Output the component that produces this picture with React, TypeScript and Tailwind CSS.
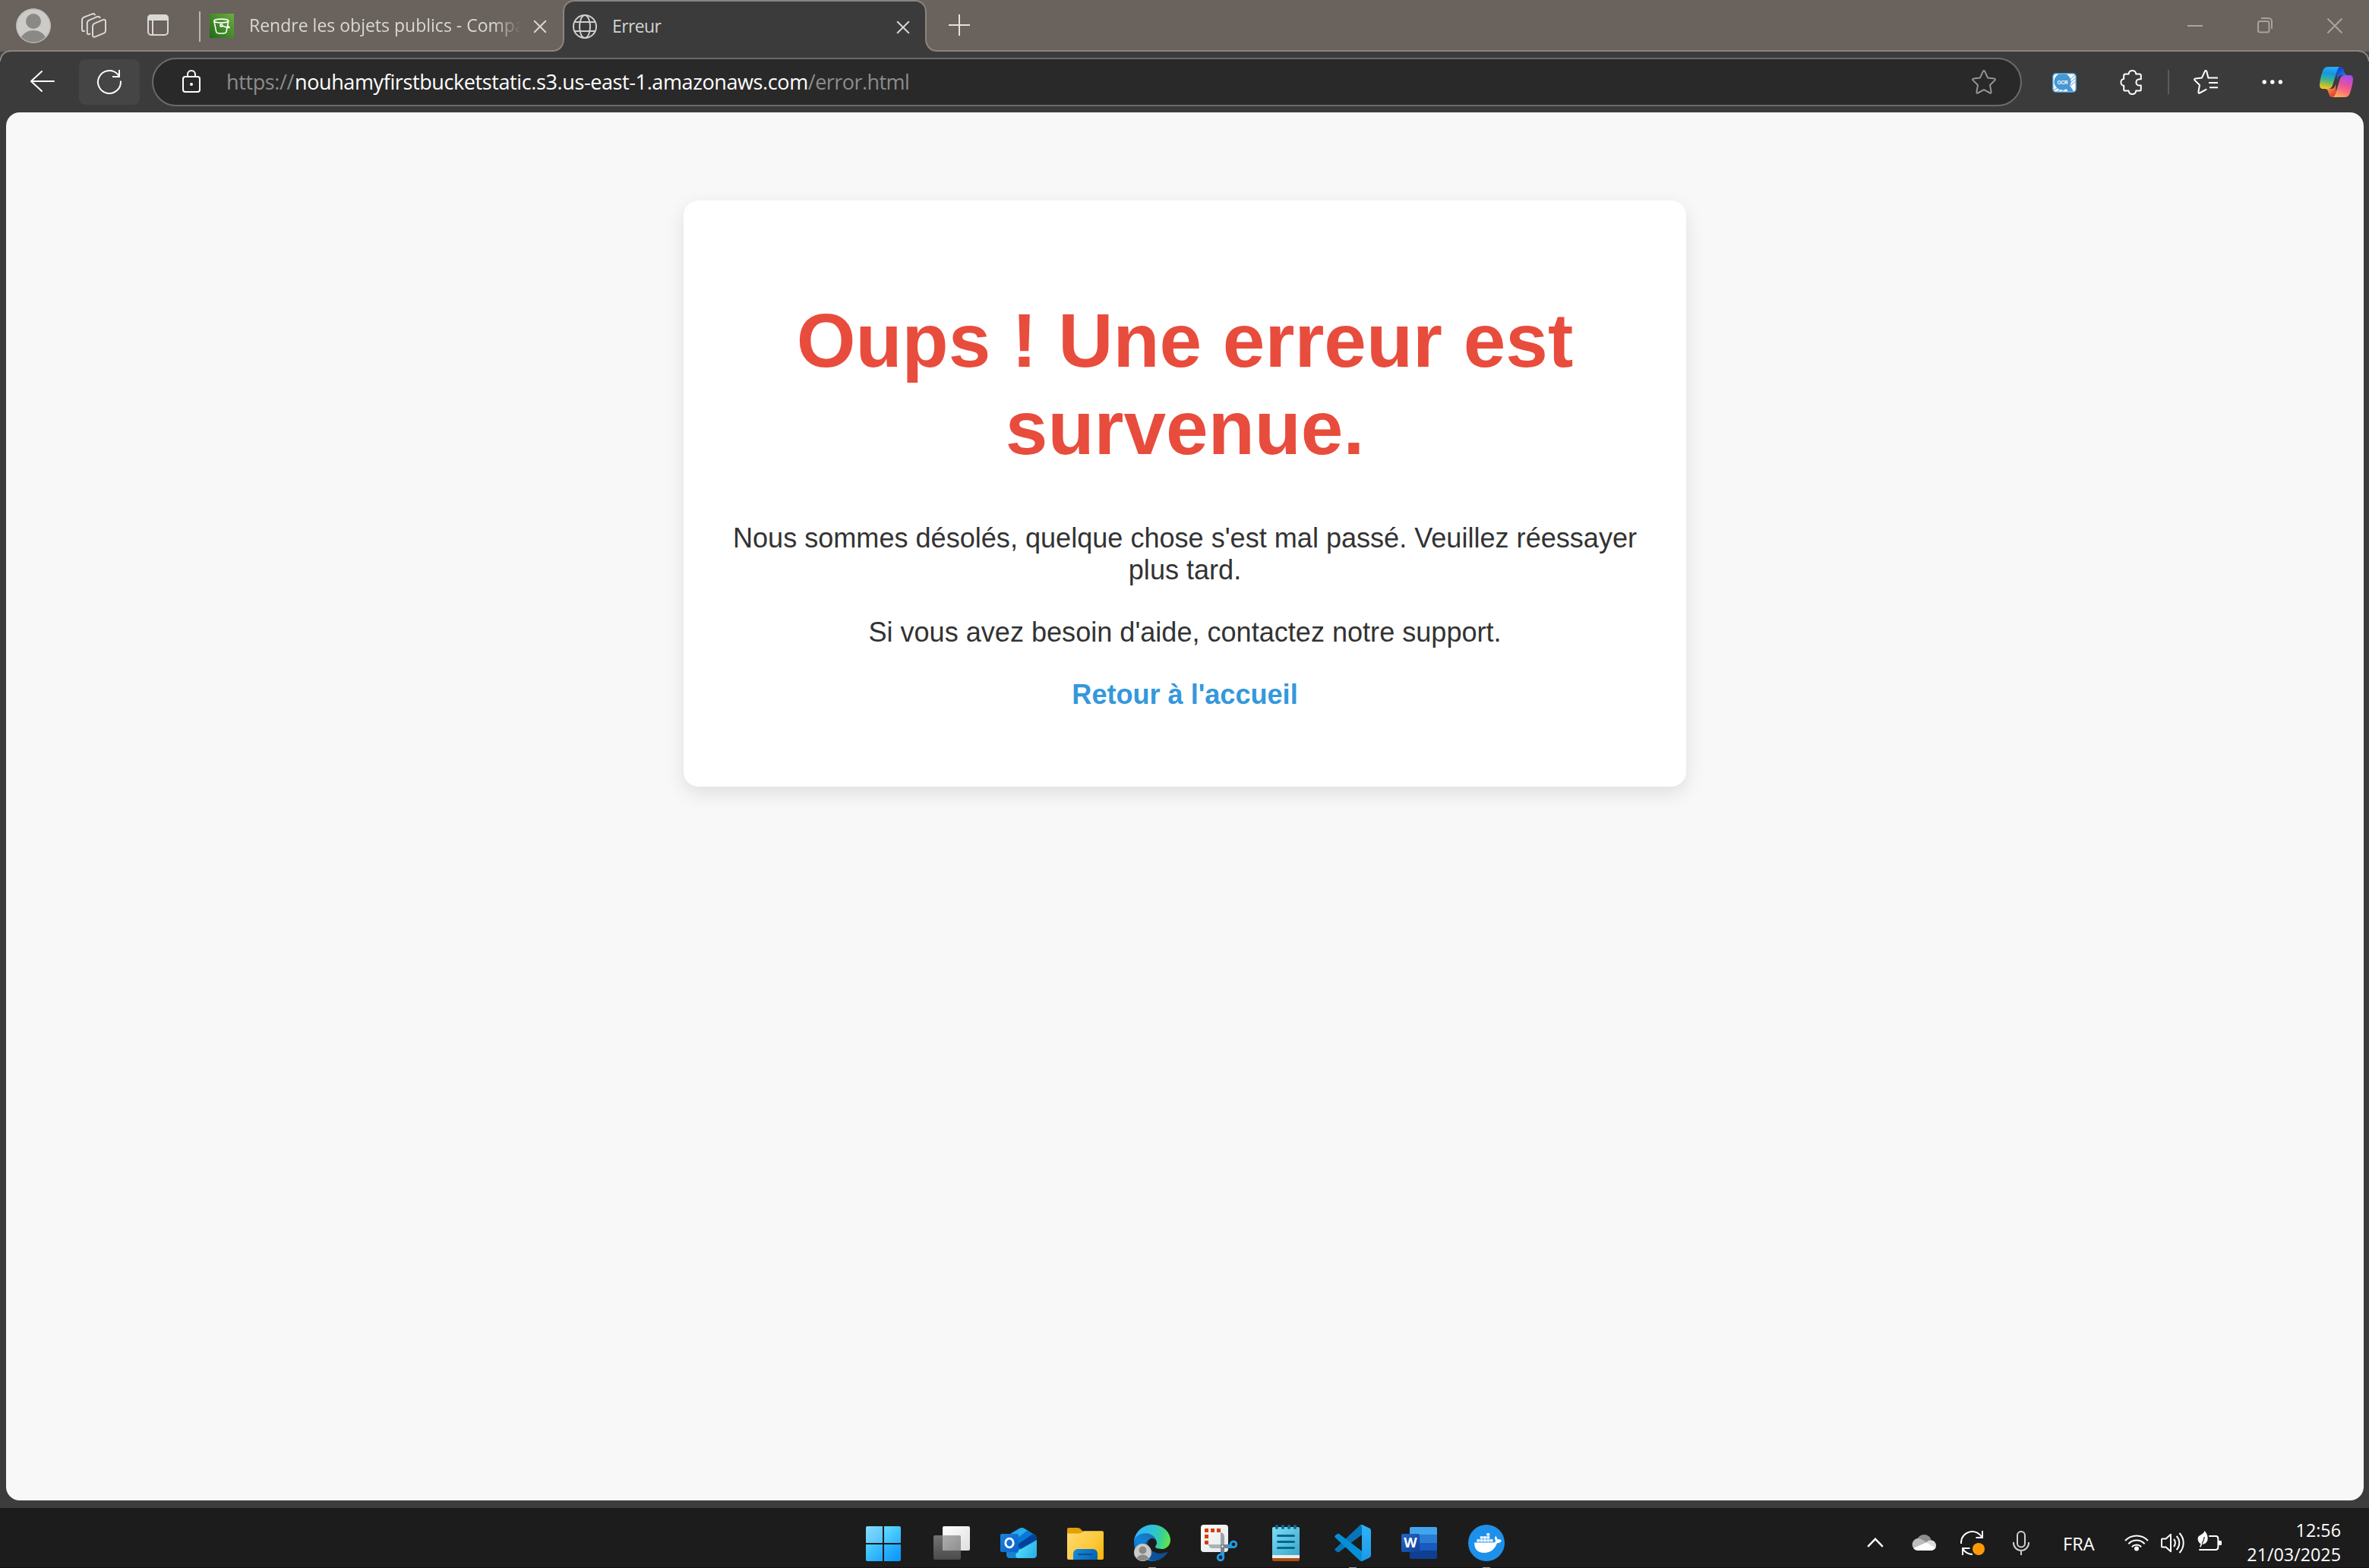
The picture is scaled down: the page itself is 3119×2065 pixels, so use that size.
import type { ReactNode } from "react";

type SvgProps = { w: number; h: number; className?: string; children: ReactNode; box?: string };

function Svg({ w, h, className = "", children, box }: SvgProps) {
  return (
    <svg width={w} height={h} viewBox={box ?? `0 0 ${w} ${h}`} fill="none" className={`shrink-0 overflow-visible ${className}`}>
      {children}
    </svg>
  );
}

/* ---------- tab strip ---------- */

function Avatar({ size, className = "" }: { size: number; className?: string }) {
  return (
    <Svg w={size} h={size} box="0 0 46 46" className={className}>
      <clipPath id={`av${size}`}><circle cx="23" cy="23" r="22.6" /></clipPath>
      <circle cx="23" cy="23" r="22.8" fill="#cdcbc7" />
      <g clipPath={`url(#av${size})`} fill="#8b8985">
        <circle cx="23" cy="17" r="10" />
        <ellipse cx="23" cy="44" rx="17.5" ry="15" />
      </g>
      <circle cx="23" cy="23" r="22.2" stroke="#bab7b2" strokeWidth="1.2" />
    </Svg>
  );
}

function WorkspacesIcon() {
  return (
    <Svg w={33} h={33} className="ml-[40px]">
      <g stroke="#dad8d5" strokeWidth="2" strokeLinejoin="round" strokeLinecap="round">
        <path d="M18 13.6 L28.6 9.2 C30.6 8.4 32 9.1 32 11 V23.5 C32 25 31.3 26 30 26.6 L18.4 31.4 C16.4 32.2 15 31.4 15 29.5 V17.8 C15 15.6 16 14.4 18 13.6 Z" />
        <path d="M11.4 27.6 C8.8 28.8 7.8 28 7.8 25.6 V13.6 C7.8 11.6 8.6 10.4 10.4 9.6 L20.6 5.2 C22.6 4.4 23.8 4.8 24.6 6.2" />
        <path d="M4 23.8 C1.8 24.6 1 23.6 1 21.6 V9.8 C1 7.8 1.8 6.4 3.6 5.6 L13.8 1.6 C15.8 .8 17.4 1.2 18 2.4" />
      </g>
    </Svg>
  );
}

function TabActionsIcon() {
  return (
    <Svg w={28} h={28} className="ml-[54px]">
      <rect x="1" y="1" width="26" height="26" rx="4" stroke="#dad8d5" strokeWidth="2" />
      <path d="M0 8 V5 a5 5 0 0 1 5-5 H23 a5 5 0 0 1 5 5 V8 Z" fill="#dad8d5" />
      <path d="M7 8 V27" stroke="#dad8d5" strokeWidth="2" />
    </Svg>
  );
}

function BucketFavicon() {
  return (
    <Svg w={32} h={32} className="ml-[12px] mt-[2px]">
      <defs>
        <linearGradient id="s3" x1="0" y1="32" x2="32" y2="0" gradientUnits="userSpaceOnUse">
          <stop stopColor="#1f6a17" /><stop offset="1" stopColor="#6cae3e" />
        </linearGradient>
      </defs>
      <rect width="32" height="32" fill="url(#s3)" />
      <g stroke="#fff" strokeWidth="1.6" strokeLinejoin="round" strokeLinecap="round">
        <ellipse cx="15.3" cy="9.6" rx="9.4" ry="2.5" />
        <path d="M5.9 9.8 L8.8 24.2 C9.6 26.6 21 26.6 21.9 24.2 L24.7 9.8" />
        <circle cx="15.3" cy="15.6" r="1.5" />
        <path d="M16.8 16 C20 17.4 23 18.4 25 18.4 C26.4 18.4 26.6 17.6 24 16.4" />
      </g>
    </Svg>
  );
}

function GlobeIcon() {
  return (
    <Svg w={32} h={32} className="ml-[11px]">
      <g stroke="#cfcfcf" strokeWidth="2">
        <circle cx="16" cy="16" r="15" />
        <ellipse cx="16" cy="16" rx="7" ry="15" />
        <path d="M2.5 10 H29.5 M2.5 22 H29.5" />
      </g>
    </Svg>
  );
}

function CloseIcon({ className = "" }: { className?: string }) {
  return (
    <Svg w={16} h={16} className={className}>
      <path d="M.7 .7 L15.3 15.3 M15.3 .7 L.7 15.3" stroke="#d8d6d3" strokeWidth="2" strokeLinecap="round" />
    </Svg>
  );
}

function TabStrip() {
  return (
    <div className="flex h-[68px] items-stretch bg-[#6a625c]">
      <div className="flex w-[741px] shrink-0 items-center border-b-2 border-[#8b857f] text-[23px] text-[#dad8d5]">
        <Avatar size={46} className="ml-[21px] mt-[2px]" />
        <WorkspacesIcon />
        <TabActionsIcon />
        <div className="ml-[40px] mt-1 h-10 w-[2px] bg-[#bab5b0]" />
        <BucketFavicon />
        <div className="ml-[20px] w-[362px] whitespace-nowrap leading-[66px] [mask-image:linear-gradient(to_right,black_322px,transparent_358px)]">
          Rendre les objets publics - Compa
        </div>
        <CloseIcon className="ml-[13px] mt-1" />
      </div>
      <div className="relative flex w-[479px] shrink-0 items-center rounded-t-[15px] border-x-2 border-t-2 border-[#8b857f] bg-[#3b3b3b] text-[23px] text-[#d2d2d2]">
        <svg width="16" height="18" viewBox="0 0 16 18" fill="none" className="absolute -left-[16px] bottom-0">
          <path d="M0 18 V17 C9 17 15 11 15 1 V0 H16 V18 Z" fill="#3b3b3b" />
          <path d="M0 17 C9 17 15 11 15 1 V0" stroke="#8b857f" strokeWidth="2" />
        </svg>
        <svg width="16" height="18" viewBox="0 0 16 18" fill="none" className="absolute -right-[16px] bottom-0">
          <path d="M16 18 V17 C7 17 1 11 1 1 V0 H0 V18 Z" fill="#3b3b3b" />
          <path d="M16 17 C7 17 1 11 1 1 V0" stroke="#8b857f" strokeWidth="2" />
        </svg>
        <GlobeIcon />
        <div className="-mt-[2px] ml-[20px] grow leading-[66px] tracking-[-0.6px]">Erreur</div>
        <CloseIcon className="mr-[21px] mt-[2px]" />
      </div>
      <div className="flex grow items-center border-b-2 border-[#8b857f]">
        <Svg w={28} h={28} className="ml-[29px]">
          <path d="M14 0 V28 M0 14 H28" stroke="#e4e2e0" strokeWidth="2" />
        </Svg>
        <div className="grow" />
        <Svg w={20} h={20}><path d="M0 11 H20" stroke="#a8a39f" strokeWidth="2" /></Svg>
        <Svg w={20} h={21} className="ml-[72px]">
          <rect x="1" y="5" width="14.5" height="14.5" rx="2.5" stroke="#a8a39f" strokeWidth="2" />
          <path d="M5 1 H14.5 A4.5 4.5 0 0 1 19 5.5 V15" stroke="#a8a39f" strokeWidth="2" />
        </Svg>
        <Svg w={20} h={20} className="ml-[72px] mr-[35px] mt-[2px]">
          <path d="M.5 .5 L19.5 19.5 M19.5 .5 L.5 19.5" stroke="#a8a39f" strokeWidth="2" />
        </Svg>
      </div>
    </div>
  );
}

/* ---------- toolbar ---------- */

function OcrIcon() {
  return (
    <Svg w={32} h={26} className="ml-[40px] mt-[2px]">
      <clipPath id="ocr"><rect x="1.5" y="1.5" width="29" height="23" rx="3.5" /></clipPath>
      <rect width="32" height="26" rx="5" fill="#4697d3" />
      <rect x="1.5" y="1.5" width="29" height="23" rx="3.5" fill="#fff" />
      <g clipPath="url(#ocr)">
        <path d="M20 12 L32 1 M22 14 L34 4 M24 17 L34 8 M-2 25 L10 18 M2 28 L14 19 M8 28 L17 21" stroke="#4697d3" strokeWidth="1" />
        <circle cx="13.5" cy="11.5" r="11" fill="#4697d3" />
        <path d="M17 18 L22 27 H30 L22 15 Z" fill="#4697d3" />
      </g>
      <text x="13.6" y="14.6" textAnchor="middle" fontSize="6.4" fontWeight="700" fill="#fff" fontFamily="Liberation Sans, sans-serif">OCR</text>
    </Svg>
  );
}

function PuzzleIcon() {
  return (
    <Svg w={28} h={33} className="ml-[58px]">
      <path
        d="M4.2 7.4 Q4.2 5.4 6.2 5.4 H10.6 C10.6 -.6 20.2 -.6 20.2 5.4 H24.6 Q26.8 5.4 26.8 7.4 V12.2 H24.8 C19 12.2 19 20.6 24.8 20.6 H26.8 V25.4 Q26.8 27.6 24.6 27.6 H20.2 C20.2 33.4 10.6 33.4 10.6 27.6 H6.2 Q4.2 27.6 4.2 25.4 V20.8 C-.8 20.8 -.8 12 4.2 12 Z"
        stroke="#fff" strokeWidth="2" strokeLinejoin="round"
      />
    </Svg>
  );
}

function CopilotIcon() {
  return (
    <Svg w={44} h={40} className="ml-[48px]">
      <defs>
        <linearGradient id="cpa" x1="14" y1="0" x2="9" y2="29" gradientUnits="userSpaceOnUse">
          <stop stopColor="#25aef4" /><stop offset=".3" stopColor="#1595e6" /><stop offset=".6" stopColor="#41b489" /><stop offset="1" stopColor="#fcc70c" />
        </linearGradient>
        <linearGradient id="cpb" x1="24" y1="0" x2="33" y2="12" gradientUnits="userSpaceOnUse">
          <stop stopColor="#0b38c4" /><stop offset="1" stopColor="#1f7cf2" />
        </linearGradient>
        <linearGradient id="cpc" x1="37" y1="11" x2="26" y2="40" gradientUnits="userSpaceOnUse">
          <stop stopColor="#a34cf0" /><stop offset=".45" stopColor="#e8529d" /><stop offset=".7" stopColor="#fb6f7a" /><stop offset="1" stopColor="#ffac4e" />
        </linearGradient>
        <linearGradient id="cpd" x1="11" y1="29" x2="20" y2="40" gradientUnits="userSpaceOnUse">
          <stop stopColor="#ff8b45" /><stop offset="1" stopColor="#da332e" />
        </linearGradient>
      </defs>
      <path d="M22 0 H27 C30 0 31 2 32 5 L33 8 C33.8 10.2 35 11 38 11 H29 C25 11 24 14 23 17 Z" fill="url(#cpb)" />
      <path d="M22 40 H17 C14 40 13 38 12 35 L11 32 C10.2 29.8 9 29 6 29 H15 C19 29 20 26 21 23 Z" fill="url(#cpd)" />
      <path d="M11 0 H28 C25 0 24 2 23 5 L17.5 23 C16.3 27 14.5 29 11 29 H4.5 C1 29 -.4 26.6 .1 22.5 C.8 16 2.3 10 4.2 5 C5.6 1.5 7.5 0 11 0 Z" fill="url(#cpa)" />
      <path d="M33 40 H16 C19 40 20 38 21 35 L26.5 17 C27.7 13 29.5 11 33 11 H39.5 C43 11 44.4 13.4 43.9 17.5 C43.2 24 41.7 30 39.8 35 C38.4 38.5 36.5 40 33 40 Z" fill="url(#cpc)" />
    </Svg>
  );
}

function Toolbar() {
  return (
    <div className="flex h-[80px] items-start bg-[#3b3b3b] pt-2">
      <svg width="16" height="16" viewBox="0 0 16 16" fill="none" className="absolute left-0 top-[66px]">
        <path d="M0 0 H16 C6 0 1 6 0 15 Z" fill="#6a625c" />
        <path d="M0 2 H9 C5 4 2 7 0 12 Z" fill="#46423f" />
        <path d="M16 1 C6 1 1 6 0 15" stroke="#8b857f" strokeWidth="2" />
      </svg>
      <svg width="16" height="16" viewBox="0 0 16 16" fill="none" className="absolute right-0 top-[66px]">
        <path d="M16 0 H0 C10 0 15 6 16 15 Z" fill="#6a625c" />
        <path d="M16 2 H7 C11 4 14 7 16 12 Z" fill="#46423f" />
        <path d="M0 1 C10 1 15 6 16 15" stroke="#8b857f" strokeWidth="2" />
      </svg>
      <div className="flex h-16 w-full items-center">
        <Svg w={32} h={28} className="ml-[40px] -mt-[2px]">
          <path d="M1 14 H31 M15 1 L1 14 L15 27" stroke="#fff" strokeWidth="2" strokeLinecap="round" strokeLinejoin="round" />
        </Svg>
        <div className="ml-[32px] flex h-[60px] w-20 items-center justify-center rounded-lg bg-[#454545]">
          <Svg w={32} h={32}>
            <path d="M30.9 14.5 A15 15 0 1 1 26.6 5.4 L29 8 M29 0 V9 H20" stroke="#fff" strokeWidth="2" />
          </Svg>
        </div>
        <div className="ml-4 flex h-16 w-[2462px] items-center rounded-full border-2 border-[#6b6b6b] bg-[#292929]">
          <Svg w={24} h={30} className="ml-[38px] -mt-[2px]">
            <rect x="1" y="9" width="22" height="20" rx="3" stroke="#fff" strokeWidth="2" />
            <path d="M7 9 V6 A5 5 0 0 1 17 6 V9" stroke="#fff" strokeWidth="2" />
            <circle cx="12" cy="19" r="2" fill="#fff" />
          </Svg>
          <div className="ml-[34px] grow whitespace-nowrap text-[27px] leading-[60px] tracking-[-0.39px] text-[#8c8c8c]">
            <span className="mr-[1px]">https://</span><span className="text-white">nouhamyfirstbucketstatic.s3.us-east-1.amazonaws.com</span><span className="tracking-[-0.55px]">/error.html</span>
          </div>
          <Svg w={32} h={32} className="mr-[32px]">
            <path
              d="M14.9 1.8 Q16 .2 17.1 1.8 L21 10.4 L29.8 11.6 Q31.8 12.1 30.5 13.6 L24 20 L25.6 29.2 Q25.8 31.2 24 30.5 L16 26.2 L8 30.5 Q6.2 31.2 6.4 29.2 L8 20 L1.5 13.6 Q.2 12.1 2.2 11.6 L11 10.4 Z"
              stroke="#949494" strokeWidth="2" strokeLinejoin="round"
            />
          </Svg>
        </div>
        <OcrIcon />
        <PuzzleIcon />
        <div className="ml-[34px] h-8 w-[2px] bg-[#5c5c5c]" />
        <Svg w={32} h={32} className="ml-[32px]">
          <path
            d="M19.4 10.4 L17.2 1.8 Q16 .2 14.9 1.8 L11 10.4 L2.2 11.6 Q.2 12.1 1.5 13.6 L8 20 L6.4 29.2 Q6.2 31.2 8 30.5 L16.6 25.8"
            stroke="#fff" strokeWidth="2" strokeLinejoin="round" strokeLinecap="round"
          />
          <path d="M19 10.6 H32 M20 17 H32 M21 23.2 H32" stroke="#fff" strokeWidth="2" />
        </Svg>
        <Svg w={28} h={6} className="ml-[58px]">
          <g fill="#fff"><circle cx="3.2" cy="3" r="2.7" /><circle cx="13.8" cy="3" r="2.7" /><circle cx="24.4" cy="3" r="2.7" /></g>
        </Svg>
        <CopilotIcon />
      </div>
    </div>
  );
}

/* ---------- page ---------- */

function ErrorPage() {
  return (
    <div className="ml-2 mr-[7px] flex h-[1828px] justify-center rounded-[18px] bg-[#f8f8f8] font-['Liberation_Sans',Arial,sans-serif]">
      <div className="mt-[116px] h-[772px] w-[1320px] rounded-[20px] bg-white px-[66px] pt-[127px] text-center text-[36.1px] leading-[42px] text-[#333] shadow-[0_9px_26px_rgba(0,0,0,0.1)]">
        <h1 className="text-[100px] font-bold leading-[115px] text-[#e84c3d]">Oups ! Une erreur est survenue.</h1>
        <p className="mt-[67px] -mx-1">Nous sommes désolés, quelque chose s'est mal passé. Veuillez réessayer plus tard.</p>
        <p className="mt-10">Si vous avez besoin d'aide, contactez notre support.</p>
        <a className="mt-10 block font-bold text-[#3498db]">Retour à l'accueil</a>
      </div>
    </div>
  );
}

/* ---------- taskbar ---------- */

function StartIcon() {
  return (
    <Svg w={48} h={48}>
      <defs>
        <linearGradient id="w1" x1="0" y1="0" x2="1" y2="1"><stop stopColor="#85dcff" /><stop offset="1" stopColor="#52c2fb" /></linearGradient>
        <linearGradient id="w2" x1="0" y1="0" x2="1" y2="1"><stop stopColor="#62dcff" /><stop offset="1" stopColor="#2ab2fb" /></linearGradient>
        <linearGradient id="w3" x1="0" y1="0" x2="1" y2="1"><stop stopColor="#4fd0ff" /><stop offset="1" stopColor="#1fa5fb" /></linearGradient>
        <linearGradient id="w4" x1="0" y1="0" x2="1" y2="1"><stop stopColor="#35b9fc" /><stop offset="1" stopColor="#0794fb" /></linearGradient>
      </defs>
      <path d="M-1 4 a2 2 0 0 1 2-2 H21 V24 H-1 Z" fill="url(#w1)" />
      <path d="M23 2 H43 a2 2 0 0 1 2 2 V24 H23 Z" fill="url(#w2)" />
      <path d="M-1 26 H21 V48 H1 a2 2 0 0 1 -2-2 Z" fill="url(#w3)" />
      <path d="M23 26 H45 V46 a2 2 0 0 1 -2 2 H23 Z" fill="url(#w4)" />
    </Svg>
  );
}

function TaskViewIcon() {
  return (
    <Svg w={48} h={48}>
      <defs>
        <linearGradient id="tv1" x1="0" y1="0" x2="1" y2="1"><stop stopColor="#fff" /><stop offset="1" stopColor="#dedede" /></linearGradient>
        <linearGradient id="tv2" x1="0" y1="0" x2="0" y2="1"><stop stopColor="#737373" /><stop offset="1" stopColor="#4b4b4b" /></linearGradient>
        <linearGradient id="tv3" x1="0" y1="0" x2="1" y2="1"><stop stopColor="#aeaeae" /><stop offset="1" stopColor="#8f8f8f" /></linearGradient>
      </defs>
      <rect x="0" y="14" width="36" height="32" rx="2" fill="url(#tv2)" />
      <rect x="12" y="2" width="36" height="32" rx="2" fill="url(#tv1)" />
      <path d="M12 14 H34 a2 2 0 0 1 2 2 V34 H14 a2 2 0 0 1 -2-2 Z" fill="url(#tv3)" />
    </Svg>
  );
}

function OutlookIcon() {
  return (
    <Svg w={48} h={48}>
      <defs>
        <linearGradient id="ol1" x1="20" y1="30" x2="48" y2="44" gradientUnits="userSpaceOnUse"><stop stopColor="#4fe4ff" /><stop offset="1" stopColor="#2ba8e6" /></linearGradient>
        <linearGradient id="ol2" x1="0" y1="12" x2="24" y2="36" gradientUnits="userSpaceOnUse"><stop stopColor="#1784e0" /><stop offset="1" stopColor="#0b5fc6" /></linearGradient>
        <clipPath id="olc"><path d="M8 18 Q8 15 11 13 L25 4.8 Q28 3 31 4.8 L45 13 Q48 15 48 18 V39 Q48 44 43 44 H13 Q8 44 8 39 Z" /></clipPath>
      </defs>
      <g clipPath="url(#olc)">
        <rect x="8" y="2" width="40" height="42" fill="#1c93dc" />
        <path d="M8 16 L30 3 L37 8 L14 22 Z" fill="#2aaae8" />
        <path d="M36 7 L43 12 L24 25 V17 Z" fill="#0a77d6" />
        <path d="M43 12 L48 16 V21 L28 32 L24 31 V25 Z" fill="#00449a" />
        <path d="M48 20 V44 H22 Q18 40 22 35 Z" fill="url(#ol1)" />
        <path d="M8 34 L24 36 Q18 39 21 43 L22 44 H8 Z" fill="#1883cf" />
      </g>
      <rect x="0" y="12" width="24" height="24" rx="2" fill="url(#ol2)" />
      <ellipse cx="12" cy="24" rx="5.2" ry="5.9" stroke="#fff" strokeWidth="2.8" />
    </Svg>
  );
}

function FolderIcon() {
  return (
    <Svg w={48} h={48}>
      <defs>
        <linearGradient id="fo1" x1="0" y1="8" x2="48" y2="46" gradientUnits="userSpaceOnUse"><stop stopColor="#ffda70" /><stop offset=".6" stopColor="#fdc93c" /><stop offset="1" stopColor="#f8b400" /></linearGradient>
        <linearGradient id="fo2" x1="8" y1="32" x2="40" y2="46" gradientUnits="userSpaceOnUse"><stop stopColor="#1a8bdc" /><stop offset="1" stopColor="#0563b5" /></linearGradient>
      </defs>
      <path d="M0 14 V6 a2 2 0 0 1 2-2 H14 Q17 4 18.5 6.5 L21 9 V14 Z" fill="#e0a006" />
      <path d="M0 11.5 H15 Q18 11.5 20 9.5 Q21 8.3 23 8.3 H46 a2 2 0 0 1 2 2 V44 a2 2 0 0 1 -2 2 H2 a2 2 0 0 1 -2-2 Z" fill="url(#fo1)" />
      <path d="M8 46 V38 a6 6 0 0 1 6-6 H34 a6 6 0 0 1 6 6 V46 Z" fill="url(#fo2)" />
      <path d="M15 39 H33" stroke="#0b4f8f" strokeWidth="2" strokeLinecap="round" />
    </Svg>
  );
}

function EdgeIcon() {
  return (
    <div className="relative h-12 w-12">
      <Svg w={48} h={48} box="0 0 256 256">
        <defs>
          <linearGradient id="ed1" x1="60" y1="180" x2="240" y2="180" gradientUnits="userSpaceOnUse"><stop stopColor="#0c59a4" /><stop offset="1" stopColor="#114a8b" /></linearGradient>
          <linearGradient id="ed2" x1="150" y1="100" x2="40" y2="220" gradientUnits="userSpaceOnUse"><stop stopColor="#1b6fb8" /><stop offset=".5" stopColor="#1383da" /><stop offset="1" stopColor="#0078d4" /></linearGradient>
          <linearGradient id="ed3" x1="10" y1="60" x2="256" y2="130" gradientUnits="userSpaceOnUse"><stop stopColor="#35b4f5" /><stop offset=".4" stopColor="#2bc1dd" /><stop offset=".7" stopColor="#36cf9a" /><stop offset="1" stopColor="#66eb3c" /></linearGradient>
        </defs>
        <path d="M231 190.5c-3.4 1.8-6.9 3.4-10.5 4.7a101.7 101.7 0 0 1-35.9 6.5c-47.3 0-88.5-32.5-88.5-74.3a31.5 31.5 0 0 1 16.4-27.3c-42.8 1.8-53.8 46.4-53.8 72.5 0 74 68.1 81.4 82.8 81.4 7.9 0 19.8-2.3 27-4.6l1.3-.4A128.3 128.3 0 0 0 236 195a4 4 0 0 0-5-4.5Z" fill="url(#ed1)" />
        <path d="M105.7 241.4a79.2 79.2 0 0 1-22.7-21.3 80.7 80.7 0 0 1 29.5-120c3.2-1.5 8.5-4.1 15.6-4a32.4 32.4 0 0 1 25.7 13 31.9 31.9 0 0 1 6.3 18.7c0-.2 24.5-79.6-80-79.6-43.9 0-80 41.7-80 78.2a130 130 0 0 0 12.7 56A128 128 0 0 0 169.5 249.4a75.5 75.5 0 0 1-63.9-8Z" fill="url(#ed2)" />
        <path d="M152.2 149c-.9 1-3.4 2.5-3.4 5.6 0 2.6 1.7 5.2 4.8 7.3 14.3 10 41.4 8.6 41.5 8.6 10.7 0 21.1-2.9 30.3-8.3a61.4 61.4 0 0 0 30.5-53c.2-22.4-8-37.3-11.3-43.9C223.9 23.9 178.7 0 128.1 0 56.9 0 0 57.2 0 126.2c.5-36.5 36.8-66 80-66 3.5 0 23.5.3 42 10.1 16.3 8.6 24.9 18.9 30.8 29.2 6.2 10.7 7.3 24.2 7.3 29.5 0 5.4-2.7 13.3-8 20Z" fill="url(#ed3)" />
      </Svg>
      <Avatar size={23} className="absolute left-0 top-[25px]" />
    </div>
  );
}

function SnipIcon() {
  return (
    <Svg w={48} h={48}>
      <defs>
        <linearGradient id="sn" x1="0" y1="0" x2="1" y2="1"><stop stopColor="#fbfbfb" /><stop offset="1" stopColor="#e4e7ea" /></linearGradient>
      </defs>
      <rect width="36" height="36" rx="4" fill="url(#sn)" />
      <path fill="#da3b01" d="M5 6 a1 1 0 0 1 1-1 H10 V10 H5 Z M13 5 H18 V10 H13 Z M21 5 H25 a1 1 0 0 1 1 1 V10 H21 Z M5 13 H10 V18 H5 Z M5 21 H10 V26 H6 a1 1 0 0 1 -1-1 Z" />
      <path d="M26 10 Q31 11 31 16 V36 H26 Z" fill="#99a3ab" />
      <path d="M10 26 H36 V31 H15 Q11 31 10 26 Z" fill="#aab2b9" />
      <path d="M26 26 H36 V31 H31 V36 H26 Z" fill="#7b848c" />
      <path d="M28.5 27 V30 M27 28.5 H30" stroke="#dfe3e6" strokeWidth="1" />
      <g stroke="#1f9ce4" strokeWidth="2.8">
        <circle cx="43" cy="25.8" r="3.8" /><circle cx="26" cy="43" r="3.8" />
      </g>
      <path d="M36 26 H39 L41 31 H36 Z M26 36 H31 V42 L26 39.5 Z" fill="#1f9ce4" />
    </Svg>
  );
}

function NotepadIcon() {
  return (
    <Svg w={48} h={48}>
      <defs>
        <linearGradient id="np" x1="0" y1="0" x2="1" y2="1"><stop stopColor="#7fdcf6" /><stop offset="1" stopColor="#3aa7cb" /></linearGradient>
      </defs>
      <path d="M6 40 H42 V46 a2 2 0 0 1 -2 2 H8 a2 2 0 0 1 -2-2 Z" fill="#a9500f" />
      <rect x="6" y="38" width="36" height="6" fill="#f0eeee" />
      <path d="M6 5 a2 2 0 0 1 2-2 H40 a2 2 0 0 1 2 2 V40 H6 Z" fill="url(#np)" />
      <path d="M12 2 V4 M20 2 V4 M28 2 V4 M36 2 V4" stroke="#0b6c90" strokeWidth="4" strokeLinecap="round" />
      <path d="M13.5 14.5 H34.5 M13.5 22.5 H34.5 M13.5 30.5 H34.5" stroke="#04678d" strokeWidth="3" strokeLinecap="round" />
    </Svg>
  );
}

function VsCodeIcon() {
  return (
    <Svg w={48} h={48}>
      <defs>
        <linearGradient id="vs" x1="0" y1="0" x2="0" y2="1"><stop stopColor="#2cb4f7" /><stop offset="1" stopColor="#1f98ea" /></linearGradient>
      </defs>
      <path d="M.6 32 L32.6 1.4 Q34 0 36 .2 V13.2 L6 36 Q4.6 36.8 3.4 35.8 L.8 33.8 Q-.2 32.8 .6 32 Z" fill="#0775b8" />
      <path d="M.6 14.4 L3.4 12.2 Q4.6 11.2 6 12 L36 34.8 V47.8 Q34 48 32.6 46.6 L.8 16.8 Q-.2 15.4 .6 14.4 Z" fill="#0590d6" />
      <path d="M34 .3 Q35.6 -.3 37 .3 L46.4 4.8 Q48 5.6 48 7.4 V40.6 Q48 42.4 46.4 43.2 L37 47.7 Q35.6 48.3 34 47.7 Q36 46.8 36 45 V3 Q36 1.2 34 .3 Z" fill="url(#vs)" />
    </Svg>
  );
}

function WordIcon() {
  return (
    <Svg w={48} h={48}>
      <defs>
        <linearGradient id="wd" x1="0" y1="12" x2="24" y2="36" gradientUnits="userSpaceOnUse"><stop stopColor="#2368c4" /><stop offset="1" stopColor="#0f3f9c" /></linearGradient>
      </defs>
      <path d="M11 5 a2 2 0 0 1 2-2 H45 a2 2 0 0 1 2 2 V13 H11 Z" fill="#41a5ee" />
      <rect x="11" y="13" width="36" height="11" fill="#2b7cd3" />
      <rect x="11" y="24" width="36" height="10" fill="#185abd" />
      <path d="M11 34 H47 V43 a2 2 0 0 1 -2 2 H13 a2 2 0 0 1 -2-2 Z" fill="#103f91" />
      <rect x="0" y="12" width="24" height="24" rx="2" fill="url(#wd)" />
      <text x="12" y="30.4" textAnchor="middle" fontSize="18" fontWeight="700" fill="#fff" fontFamily="Open Sans, sans-serif">W</text>
    </Svg>
  );
}

function DockerIcon() {
  return (
    <Svg w={48} h={48}>
      <circle cx="24" cy="24" r="24" fill="#1d91ea" />
      <g fill="#fff">
        <path d="M8.2 23.4 H33 C35 23.4 36 22.6 36.2 21 C34.6 19 34.6 17 36 15 C37.6 16.4 38.4 17.8 38.6 19.4 C40.6 19 42.6 19.4 44 20.4 C43 23 41 24.2 38 24.2 C35.4 31.6 29.8 37 21 37 C12 37 8 32 8.2 23.4 Z" />
        <path d="M11.5 19.2 h3.8 v3.4 h-3.8 z M15.8 19.2 h3.8 v3.4 h-3.8 z M20.1 19.2 h3.8 v3.4 h-3.8 z M24.4 19.2 h3.8 v3.4 h-3.8 z M28.7 19.2 h3.8 v3.4 h-3.8 z M15.8 15.2 h3.8 v3.4 h-3.8 z M20.1 15.2 h3.8 v3.4 h-3.8 z M24.4 15.2 h3.8 v3.4 h-3.8 z M24.4 11.2 h3.8 v3.4 h-3.8 z" />
      </g>
    </Svg>
  );
}

function AppSlot({ children, running = false }: { children: ReactNode; running?: boolean }) {
  return (
    <div className="flex h-[57px] w-12 flex-col items-center justify-between">
      {children}
      {running && <div className="h-px w-[10px] bg-[#a09c9a]" />}
    </div>
  );
}

function Tray() {
  return (
    <div className="flex h-12 items-start">
      <Svg w={22} h={13} className="mt-[17px]"><path d="M1.2 11.8 L11 1.8 L20.8 11.8" stroke="#fff" strokeWidth="2.4" /></Svg>
      <Svg w={32} h={21} className="ml-[37px] mt-[13px]">
        <path d="M7 7 A9.6 9.6 0 0 1 25.6 7.4 L20 14 L8 9 Z" fill="#8d8d8d" />
        <path d="M8 21 A8 8 0 1 1 13.4 6.6 L20 10.6 L10 18 Z" fill="#bdbdbd" />
        <path d="M19 10.4 A7 7 0 0 1 25.4 7.6 A6.8 6.8 0 0 1 31 18 L19 12 Z" fill="#dcdcdc" />
        <path d="M2 18 L19 10.4 L31.4 17.6 A6.8 6.8 0 0 1 25.2 21 H8 A8 8 0 0 1 2 18 Z" fill="#fff" />
      </Svg>
      <Svg w={32} h={32} className="ml-[32px] mt-2">
        <path d="M1 17 V15 A14.6 14.6 0 0 1 28.6 9 M29 0 V9 H20.4 M3 32 V23 H12.5 M3.4 24 A15 15 0 0 0 16 31" stroke="#fff" strokeWidth="2" />
        <circle cx="24" cy="24" r="8" fill="#ff9a06" />
      </Svg>
      <Svg w={22} h={32} className="ml-[37px] mt-2">
        <rect x="6" y="1" width="10" height="20.4" rx="5" stroke="#d0d0d0" strokeWidth="2" />
        <path d="M1 15 V16 A10 10 0 0 0 21 16 V15 M11 26 V32" stroke="#d0d0d0" strokeWidth="2" />
      </Svg>
      <div className="ml-[44px] w-[42px] text-[23.5px] leading-[50px] text-white">FRA</div>
      <Svg w={32} h={24} className="ml-[39px] mt-[11px]">
        <path d="M1 10 A20.6 20.6 0 0 1 31 10 M5.4 14.2 A14.4 14.4 0 0 1 26.6 14.2 M9.8 18.2 A8.6 8.6 0 0 1 22.2 18.2" stroke="#fff" strokeWidth="2" />
        <circle cx="16" cy="20.4" r="3" fill="#fff" />
      </Svg>
      <Svg w={32} h={28} className="ml-[16px] mt-[10px]">
        <path d="M1 9.6 Q1 8.4 2.2 8.4 H6.6 L13 2.8 V25.2 L6.6 19.6 H2.2 Q1 19.6 1 18.4 Z" stroke="#fff" strokeWidth="2" strokeLinejoin="round" />
        <path d="M17 9 A7.6 7.6 0 0 1 17 19 M20.6 5 A13 13 0 0 1 20.6 23 M24.4 1 A18.6 18.6 0 0 1 24.4 27" stroke="#fff" strokeWidth="2" />
      </Svg>
      <Svg w={32} h={28} className="ml-[16px] mt-2">
        <path d="M16 7 H24 Q27.4 7 27.4 10.4 V21.6 Q27.4 25 24 25 H3" stroke="#fff" strokeWidth="2" strokeLinecap="round" />
        <rect x="28" y="13" width="4" height="6" rx="1" fill="#fff" />
        <path d="M9.6 0 C13 4 14.4 8 13.4 12.6 C12.6 15.6 10 17.6 6.6 17.8 L4.6 17.6 C1.4 15.4 0 12 .8 9 C1.8 5.6 8.2 5 9.6 0 Z" fill="#fff" />
        <path d="M9 8 C9.6 12 7 14 5.8 18" stroke="#1c1c1c" strokeWidth="1.2" />
        <path d="M5.6 17 L4 20.6" stroke="#fff" strokeWidth="1.6" strokeLinecap="round" />
      </Svg>
    </div>
  );
}

function Taskbar() {
  return (
    <div className="flex h-[79px] items-start border-b border-[#17100f] bg-[#1c1c1c] pt-[22px]">
      <div className="ml-[1141px] flex gap-10">
        <AppSlot><StartIcon /></AppSlot>
        <AppSlot><TaskViewIcon /></AppSlot>
        <AppSlot><OutlookIcon /></AppSlot>
        <AppSlot><FolderIcon /></AppSlot>
        <AppSlot running><EdgeIcon /></AppSlot>
        <AppSlot><SnipIcon /></AppSlot>
        <AppSlot><NotepadIcon /></AppSlot>
        <AppSlot running><VsCodeIcon /></AppSlot>
        <AppSlot><WordIcon /></AppSlot>
        <AppSlot running><DockerIcon /></AppSlot>
      </div>
      <div className="ml-[477px]"><Tray /></div>
      <div className="-mt-[9px] ml-auto mr-[37px] text-right text-[23.3px] leading-8 text-white">
        <div>12:56</div>
        <div>21/03/2025</div>
      </div>
    </div>
  );
}

export default function App() {
  return (
    <div className="relative h-[2065px] w-[3119px] overflow-hidden bg-[#3b3b3b] font-['Open_Sans','Noto_Sans',sans-serif]">
      <TabStrip />
      <Toolbar />
      <ErrorPage />
      <div className="h-[10px] bg-[#3d3d3d]" />
      <Taskbar />
    </div>
  );
}
